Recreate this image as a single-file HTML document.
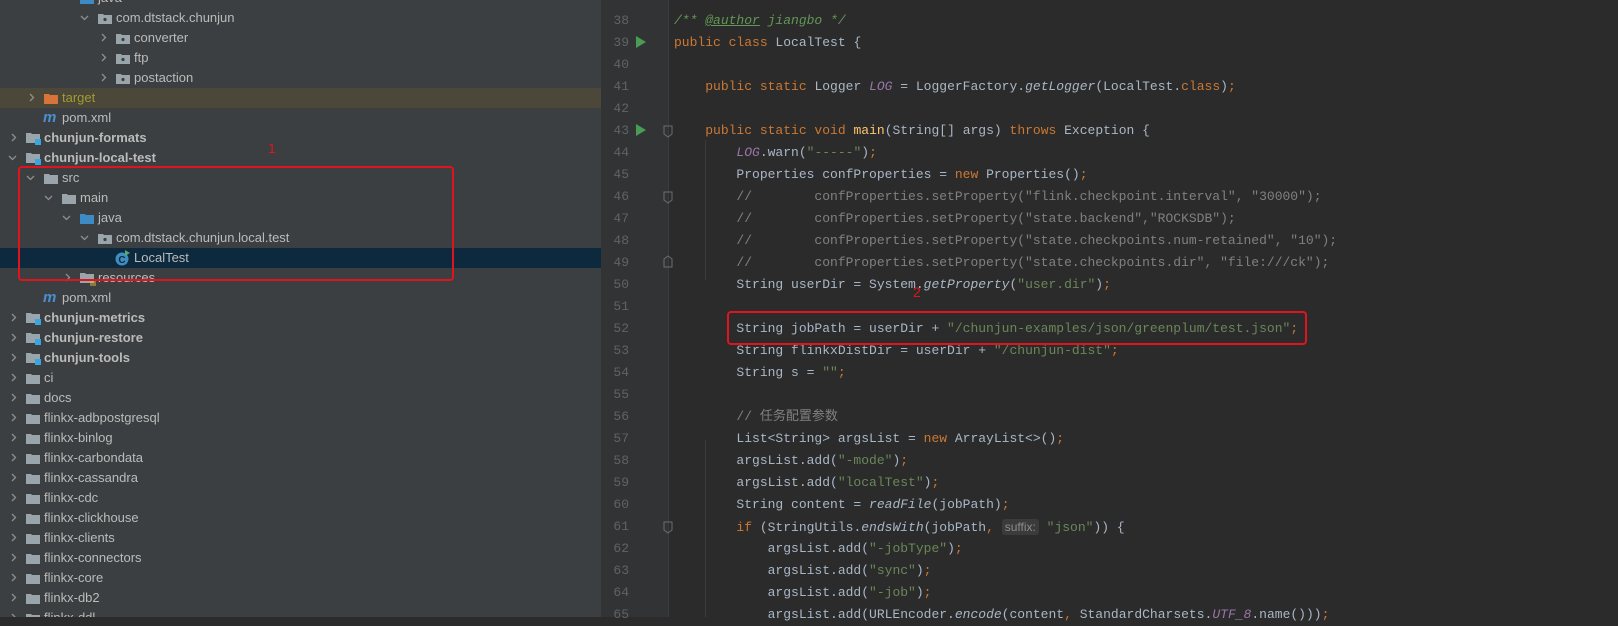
<!DOCTYPE html>
<html><head><meta charset="utf-8"><style>
body{margin:0;width:1618px;height:617px;overflow:hidden;background:#2b2b2b;position:relative;font-family:"Liberation Sans","Noto Sans CJK SC",sans-serif}
#tree{position:absolute;left:0;top:0;width:601px;height:617px;background:#3c3f41;overflow:hidden}
.r{position:absolute;left:0;width:601px;height:20px;line-height:20px;font-size:13px;color:#bbbbbb;white-space:nowrap}
.r svg{position:absolute}
.r .t{position:absolute;top:0}
.b{font-weight:bold}
#ed{position:absolute;left:601px;top:0;width:1017px;height:617px;background:#2b2b2b}
#gut{position:absolute;left:601px;top:0;width:68px;height:617px;background:#313335}
.l{position:absolute;left:0;width:1618px;height:22px;line-height:22px;font-family:"Liberation Mono","Noto Sans CJK SC",monospace;font-size:13px;color:#a9b7c6;white-space:pre}
.n{position:absolute;left:607px;width:22px;text-align:right;color:#606366}
.c{position:absolute;left:674px}
.k{color:#cc7832}.s{color:#6a8759}.g{color:#808080}.p{color:#9876aa;font-style:italic}.i{font-style:italic}.m{color:#ffc66d}.d{color:#629755;font-style:italic}
.box{position:absolute;border:2px solid #e0141c;border-radius:4px}
</style></head><body>
<div id="tree">
<div class="r" style="top:-12px"><svg style="left:80px;top:5px" width="14" height="11"><path d="M0 1h5l1 1h8v9H0z" fill="#3d8ac4"/></svg><span class="t" style="left:98px">java</span></div>
<div class="r" style="top:8px"><svg style="left:80px;top:6px" width="9" height="8"><polyline points="1,2 4.5,5.5 8,2" fill="none" stroke="#8c8f91" stroke-width="1.3"/></svg><svg style="left:98px;top:5px" width="14" height="11"><path d="M0 1h5l1 1h8v9H0z" fill="#9aa4ab"/><circle cx="7" cy="6.5" r="1.6" fill="#3c3f41"/></svg><span class="t" style="left:116px">com.dtstack.chunjun</span></div>
<div class="r" style="top:28px"><svg style="left:100px;top:5px" width="8" height="10"><polyline points="2,1 5.5,4.5 2,8" fill="none" stroke="#8c8f91" stroke-width="1.3"/></svg><svg style="left:116px;top:5px" width="14" height="11"><path d="M0 1h5l1 1h8v9H0z" fill="#9aa4ab"/><circle cx="7" cy="6.5" r="1.6" fill="#3c3f41"/></svg><span class="t" style="left:134px">converter</span></div>
<div class="r" style="top:48px"><svg style="left:100px;top:5px" width="8" height="10"><polyline points="2,1 5.5,4.5 2,8" fill="none" stroke="#8c8f91" stroke-width="1.3"/></svg><svg style="left:116px;top:5px" width="14" height="11"><path d="M0 1h5l1 1h8v9H0z" fill="#9aa4ab"/><circle cx="7" cy="6.5" r="1.6" fill="#3c3f41"/></svg><span class="t" style="left:134px">ftp</span></div>
<div class="r" style="top:68px"><svg style="left:100px;top:5px" width="8" height="10"><polyline points="2,1 5.5,4.5 2,8" fill="none" stroke="#8c8f91" stroke-width="1.3"/></svg><svg style="left:116px;top:5px" width="14" height="11"><path d="M0 1h5l1 1h8v9H0z" fill="#9aa4ab"/><circle cx="7" cy="6.5" r="1.6" fill="#3c3f41"/></svg><span class="t" style="left:134px">postaction</span></div>
<div class="r" style="top:88px;background:#4b4839"><svg style="left:28px;top:5px" width="8" height="10"><polyline points="2,1 5.5,4.5 2,8" fill="none" stroke="#8c8f91" stroke-width="1.3"/></svg><svg style="left:44px;top:5px" width="14" height="11"><path d="M0 1h5l1 1h8v9H0z" fill="#d8743a"/></svg><span class="t" style="left:62px;color:#a39a32">target</span></div>
<div class="r" style="top:108px"><span class="t" style="left:43px;color:#4b8fcf;font-style:italic;font-weight:bold;font-size:15px">m</span><span class="t" style="left:62px">pom.xml</span></div>
<div class="r" style="top:128px"><svg style="left:10px;top:5px" width="8" height="10"><polyline points="2,1 5.5,4.5 2,8" fill="none" stroke="#8c8f91" stroke-width="1.3"/></svg><svg style="left:26px;top:4px" width="15" height="13"><path d="M0 1h5l1 1h8v9H0z" fill="#9aa4ab"/><rect x="9" y="7" width="6" height="6" fill="#3ba5e0"/></svg><span class="t b" style="left:44px">chunjun-formats</span></div>
<div class="r" style="top:148px"><svg style="left:8px;top:6px" width="9" height="8"><polyline points="1,2 4.5,5.5 8,2" fill="none" stroke="#8c8f91" stroke-width="1.3"/></svg><svg style="left:26px;top:4px" width="15" height="13"><path d="M0 1h5l1 1h8v9H0z" fill="#9aa4ab"/><rect x="9" y="7" width="6" height="6" fill="#3ba5e0"/></svg><span class="t b" style="left:44px">chunjun-local-test</span></div>
<div class="r" style="top:168px"><svg style="left:26px;top:6px" width="9" height="8"><polyline points="1,2 4.5,5.5 8,2" fill="none" stroke="#8c8f91" stroke-width="1.3"/></svg><svg style="left:44px;top:5px" width="14" height="11"><path d="M0 1h5l1 1h8v9H0z" fill="#9aa4ab"/></svg><span class="t" style="left:62px">src</span></div>
<div class="r" style="top:188px"><svg style="left:44px;top:6px" width="9" height="8"><polyline points="1,2 4.5,5.5 8,2" fill="none" stroke="#8c8f91" stroke-width="1.3"/></svg><svg style="left:62px;top:5px" width="14" height="11"><path d="M0 1h5l1 1h8v9H0z" fill="#9aa4ab"/></svg><span class="t" style="left:80px">main</span></div>
<div class="r" style="top:208px"><svg style="left:62px;top:6px" width="9" height="8"><polyline points="1,2 4.5,5.5 8,2" fill="none" stroke="#8c8f91" stroke-width="1.3"/></svg><svg style="left:80px;top:5px" width="14" height="11"><path d="M0 1h5l1 1h8v9H0z" fill="#3d8ac4"/></svg><span class="t" style="left:98px">java</span></div>
<div class="r" style="top:228px"><svg style="left:80px;top:6px" width="9" height="8"><polyline points="1,2 4.5,5.5 8,2" fill="none" stroke="#8c8f91" stroke-width="1.3"/></svg><svg style="left:98px;top:5px" width="14" height="11"><path d="M0 1h5l1 1h8v9H0z" fill="#9aa4ab"/><circle cx="7" cy="6.5" r="1.6" fill="#3c3f41"/></svg><span class="t" style="left:116px">com.dtstack.chunjun.local.test</span></div>
<div class="r" style="top:248px;background:#0d293e"><svg style="left:115px;top:2px" width="16" height="16"><circle cx="7" cy="9" r="6.5" fill="#3f8ec2"/><text x="7" y="13" font-size="10" font-family="Liberation Sans" font-weight="bold" fill="#0d293e" text-anchor="middle">C</text><path d="M10 0l5 3-5 3z" fill="#59a869"/></svg><span class="t" style="left:134px">LocalTest</span></div>
<div class="r" style="top:268px"><svg style="left:64px;top:5px" width="8" height="10"><polyline points="2,1 5.5,4.5 2,8" fill="none" stroke="#8c8f91" stroke-width="1.3"/></svg><svg style="left:80px;top:4px" width="16" height="14"><path d="M0 1h5l1 1h8v9H0z" fill="#9aa4ab"/><path d="M10 9h6M10 11h6M10 13h6" stroke="#d9b53a" stroke-width="1"/></svg><span class="t" style="left:98px">resources</span></div>
<div class="r" style="top:288px"><span class="t" style="left:43px;color:#4b8fcf;font-style:italic;font-weight:bold;font-size:15px">m</span><span class="t" style="left:62px">pom.xml</span></div>
<div class="r" style="top:308px"><svg style="left:10px;top:5px" width="8" height="10"><polyline points="2,1 5.5,4.5 2,8" fill="none" stroke="#8c8f91" stroke-width="1.3"/></svg><svg style="left:26px;top:4px" width="15" height="13"><path d="M0 1h5l1 1h8v9H0z" fill="#9aa4ab"/><rect x="9" y="7" width="6" height="6" fill="#3ba5e0"/></svg><span class="t b" style="left:44px">chunjun-metrics</span></div>
<div class="r" style="top:328px"><svg style="left:10px;top:5px" width="8" height="10"><polyline points="2,1 5.5,4.5 2,8" fill="none" stroke="#8c8f91" stroke-width="1.3"/></svg><svg style="left:26px;top:4px" width="15" height="13"><path d="M0 1h5l1 1h8v9H0z" fill="#9aa4ab"/><rect x="9" y="7" width="6" height="6" fill="#3ba5e0"/></svg><span class="t b" style="left:44px">chunjun-restore</span></div>
<div class="r" style="top:348px"><svg style="left:10px;top:5px" width="8" height="10"><polyline points="2,1 5.5,4.5 2,8" fill="none" stroke="#8c8f91" stroke-width="1.3"/></svg><svg style="left:26px;top:4px" width="15" height="13"><path d="M0 1h5l1 1h8v9H0z" fill="#9aa4ab"/><rect x="9" y="7" width="6" height="6" fill="#3ba5e0"/></svg><span class="t b" style="left:44px">chunjun-tools</span></div>
<div class="r" style="top:368px"><svg style="left:10px;top:5px" width="8" height="10"><polyline points="2,1 5.5,4.5 2,8" fill="none" stroke="#8c8f91" stroke-width="1.3"/></svg><svg style="left:26px;top:5px" width="14" height="11"><path d="M0 1h5l1 1h8v9H0z" fill="#9aa4ab"/></svg><span class="t" style="left:44px">ci</span></div>
<div class="r" style="top:388px"><svg style="left:10px;top:5px" width="8" height="10"><polyline points="2,1 5.5,4.5 2,8" fill="none" stroke="#8c8f91" stroke-width="1.3"/></svg><svg style="left:26px;top:5px" width="14" height="11"><path d="M0 1h5l1 1h8v9H0z" fill="#9aa4ab"/></svg><span class="t" style="left:44px">docs</span></div>
<div class="r" style="top:408px"><svg style="left:10px;top:5px" width="8" height="10"><polyline points="2,1 5.5,4.5 2,8" fill="none" stroke="#8c8f91" stroke-width="1.3"/></svg><svg style="left:26px;top:5px" width="14" height="11"><path d="M0 1h5l1 1h8v9H0z" fill="#9aa4ab"/></svg><span class="t" style="left:44px">flinkx-adbpostgresql</span></div>
<div class="r" style="top:428px"><svg style="left:10px;top:5px" width="8" height="10"><polyline points="2,1 5.5,4.5 2,8" fill="none" stroke="#8c8f91" stroke-width="1.3"/></svg><svg style="left:26px;top:5px" width="14" height="11"><path d="M0 1h5l1 1h8v9H0z" fill="#9aa4ab"/></svg><span class="t" style="left:44px">flinkx-binlog</span></div>
<div class="r" style="top:448px"><svg style="left:10px;top:5px" width="8" height="10"><polyline points="2,1 5.5,4.5 2,8" fill="none" stroke="#8c8f91" stroke-width="1.3"/></svg><svg style="left:26px;top:5px" width="14" height="11"><path d="M0 1h5l1 1h8v9H0z" fill="#9aa4ab"/></svg><span class="t" style="left:44px">flinkx-carbondata</span></div>
<div class="r" style="top:468px"><svg style="left:10px;top:5px" width="8" height="10"><polyline points="2,1 5.5,4.5 2,8" fill="none" stroke="#8c8f91" stroke-width="1.3"/></svg><svg style="left:26px;top:5px" width="14" height="11"><path d="M0 1h5l1 1h8v9H0z" fill="#9aa4ab"/></svg><span class="t" style="left:44px">flinkx-cassandra</span></div>
<div class="r" style="top:488px"><svg style="left:10px;top:5px" width="8" height="10"><polyline points="2,1 5.5,4.5 2,8" fill="none" stroke="#8c8f91" stroke-width="1.3"/></svg><svg style="left:26px;top:5px" width="14" height="11"><path d="M0 1h5l1 1h8v9H0z" fill="#9aa4ab"/></svg><span class="t" style="left:44px">flinkx-cdc</span></div>
<div class="r" style="top:508px"><svg style="left:10px;top:5px" width="8" height="10"><polyline points="2,1 5.5,4.5 2,8" fill="none" stroke="#8c8f91" stroke-width="1.3"/></svg><svg style="left:26px;top:5px" width="14" height="11"><path d="M0 1h5l1 1h8v9H0z" fill="#9aa4ab"/></svg><span class="t" style="left:44px">flinkx-clickhouse</span></div>
<div class="r" style="top:528px"><svg style="left:10px;top:5px" width="8" height="10"><polyline points="2,1 5.5,4.5 2,8" fill="none" stroke="#8c8f91" stroke-width="1.3"/></svg><svg style="left:26px;top:5px" width="14" height="11"><path d="M0 1h5l1 1h8v9H0z" fill="#9aa4ab"/></svg><span class="t" style="left:44px">flinkx-clients</span></div>
<div class="r" style="top:548px"><svg style="left:10px;top:5px" width="8" height="10"><polyline points="2,1 5.5,4.5 2,8" fill="none" stroke="#8c8f91" stroke-width="1.3"/></svg><svg style="left:26px;top:5px" width="14" height="11"><path d="M0 1h5l1 1h8v9H0z" fill="#9aa4ab"/></svg><span class="t" style="left:44px">flinkx-connectors</span></div>
<div class="r" style="top:568px"><svg style="left:10px;top:5px" width="8" height="10"><polyline points="2,1 5.5,4.5 2,8" fill="none" stroke="#8c8f91" stroke-width="1.3"/></svg><svg style="left:26px;top:5px" width="14" height="11"><path d="M0 1h5l1 1h8v9H0z" fill="#9aa4ab"/></svg><span class="t" style="left:44px">flinkx-core</span></div>
<div class="r" style="top:588px"><svg style="left:10px;top:5px" width="8" height="10"><polyline points="2,1 5.5,4.5 2,8" fill="none" stroke="#8c8f91" stroke-width="1.3"/></svg><svg style="left:26px;top:5px" width="14" height="11"><path d="M0 1h5l1 1h8v9H0z" fill="#9aa4ab"/></svg><span class="t" style="left:44px">flinkx-db2</span></div>
<div class="r" style="top:608px"><svg style="left:10px;top:5px" width="8" height="10"><polyline points="2,1 5.5,4.5 2,8" fill="none" stroke="#8c8f91" stroke-width="1.3"/></svg><svg style="left:26px;top:5px" width="14" height="11"><path d="M0 1h5l1 1h8v9H0z" fill="#9aa4ab"/></svg><span class="t" style="left:44px">flinkx-ddl</span></div>
<div class="box" style="left:18px;top:166px;width:432px;height:111px"></div>
<div style="position:absolute;left:268px;top:140px;color:#e0141c;font-size:14px">1</div>
</div>
<div id="ed"></div>
<div id="gut"></div>
<div style="position:absolute;left:668px;top:0;width:1px;height:617px;background:#3a3c3e"></div>
<div style="position:absolute;left:705px;top:440px;width:1px;height:177px;background:#3b3b3b"></div>
<div style="position:absolute;left:705px;top:140px;width:1px;height:140px;background:#3b3b3b"></div>

<div class="l" style="top:10px"><span class="n">38</span><span class="c"><span class="d">/** <u>@author</u> jiangbo */</span></span></div>
<div class="l" style="top:32px"><span class="n">39</span><span class="c"><span class="k">public class</span> LocalTest {</span></div>
<div class="l" style="top:54px"><span class="n">40</span></div>
<div class="l" style="top:76px"><span class="n">41</span><span class="c">    <span class="k">public static</span> Logger <span class="p">LOG</span> = LoggerFactory.<span class="i">getLogger</span>(LocalTest.<span class="k">class</span>)<span class="k">;</span></span></div>
<div class="l" style="top:98px"><span class="n">42</span></div>
<div class="l" style="top:120px"><span class="n">43</span><span class="c">    <span class="k">public static void</span> <span class="m">main</span>(String[] args) <span class="k">throws</span> Exception {</span></div>
<div class="l" style="top:142px"><span class="n">44</span><span class="c">        <span class="p">LOG</span>.warn(<span class="s">"-----"</span>)<span class="k">;</span></span></div>
<div class="l" style="top:164px"><span class="n">45</span><span class="c">        Properties confProperties = <span class="k">new</span> Properties()<span class="k">;</span></span></div>
<div class="l" style="top:186px"><span class="n">46</span><span class="c g">        //        confProperties.setProperty("flink.checkpoint.interval", "30000");</span></div>
<div class="l" style="top:208px"><span class="n">47</span><span class="c g">        //        confProperties.setProperty("state.backend","ROCKSDB");</span></div>
<div class="l" style="top:230px"><span class="n">48</span><span class="c g">        //        confProperties.setProperty("state.checkpoints.num-retained", "10");</span></div>
<div class="l" style="top:252px"><span class="n">49</span><span class="c g">        //        confProperties.setProperty("state.checkpoints.dir", "file:///ck");</span></div>
<div class="l" style="top:274px"><span class="n">50</span><span class="c">        String userDir = System.<span class="i">getProperty</span>(<span class="s">"user.dir"</span>)<span class="k">;</span></span></div>
<div class="l" style="top:296px"><span class="n">51</span></div>
<div class="l" style="top:318px"><span class="n">52</span><span class="c">        String jobPath = userDir + <span class="s">"/chunjun-examples/json/greenplum/test.json"</span><span class="k">;</span></span></div>
<div class="l" style="top:340px"><span class="n">53</span><span class="c">        String flinkxDistDir = userDir + <span class="s">"/chunjun-dist"</span><span class="k">;</span></span></div>
<div class="l" style="top:362px"><span class="n">54</span><span class="c">        String s = <span class="s">""</span><span class="k">;</span></span></div>
<div class="l" style="top:384px"><span class="n">55</span></div>
<div class="l" style="top:406px"><span class="n">56</span><span class="c g">        // 任务配置参数</span></div>
<div class="l" style="top:428px"><span class="n">57</span><span class="c">        List&lt;String&gt; argsList = <span class="k">new</span> ArrayList&lt;&gt;()<span class="k">;</span></span></div>
<div class="l" style="top:450px"><span class="n">58</span><span class="c">        argsList.add(<span class="s">"-mode"</span>)<span class="k">;</span></span></div>
<div class="l" style="top:472px"><span class="n">59</span><span class="c">        argsList.add(<span class="s">"localTest"</span>)<span class="k">;</span></span></div>
<div class="l" style="top:494px"><span class="n">60</span><span class="c">        String content = <span class="i">readFile</span>(jobPath)<span class="k">;</span></span></div>
<div class="l" style="top:516px"><span class="n">61</span><span class="c">        <span class="k">if</span> (StringUtils.<span class="i">endsWith</span>(jobPath<span class="k">,</span> <span style="background:#3b3b3b;color:#8c8c8c;font-family:'Liberation Sans';font-size:12px;padding:1px 3px;border-radius:3px">suffix:</span> <span class="s">"json"</span>)) {</span></div>
<div class="l" style="top:538px"><span class="n">62</span><span class="c">            argsList.add(<span class="s">"-jobType"</span>)<span class="k">;</span></span></div>
<div class="l" style="top:560px"><span class="n">63</span><span class="c">            argsList.add(<span class="s">"sync"</span>)<span class="k">;</span></span></div>
<div class="l" style="top:582px"><span class="n">64</span><span class="c">            argsList.add(<span class="s">"-job"</span>)<span class="k">;</span></span></div>
<div class="l" style="top:604px"><span class="n">65</span><span class="c">            argsList.add(URLEncoder.<span class="i">encode</span>(content<span class="k">,</span> StandardCharsets.<span class="p">UTF_8</span>.name()))<span class="k">;</span></span></div>

<svg style="position:absolute;left:636px;top:36px" width="10" height="12"><path d="M0 0l10 6-10 6z" fill="#499c54"/></svg>
<svg style="position:absolute;left:636px;top:124px" width="10" height="12"><path d="M0 0l10 6-10 6z" fill="#499c54"/></svg>
<svg style="position:absolute;left:663px;top:125px" width="10" height="13"><path d="M1 1h8v8l-4 3-4-3z" fill="none" stroke="#6a6d70"/></svg>
<svg style="position:absolute;left:663px;top:191px" width="10" height="13"><path d="M1 1h8v8l-4 3-4-3z" fill="none" stroke="#6a6d70"/></svg>
<svg style="position:absolute;left:663px;top:255px" width="10" height="13"><path d="M1 12h8V4L5 1 1 4z" fill="none" stroke="#6a6d70"/></svg>
<svg style="position:absolute;left:663px;top:521px" width="10" height="13"><path d="M1 1h8v8l-4 3-4-3z" fill="none" stroke="#6a6d70"/></svg>

<div class="box" style="left:727px;top:311px;width:576px;height:30px"></div>
<div style="position:absolute;left:913px;top:284px;color:#e0141c;font-size:14px;font-family:'Liberation Sans'">2</div>
</body></html>
